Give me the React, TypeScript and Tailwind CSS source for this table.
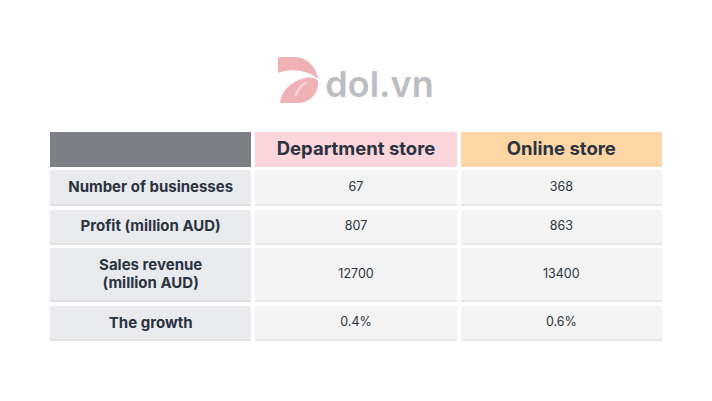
import React from 'react';

const rows = [
  { label: ['Number of businesses'], dept: '67', online: '368', h: 'h-[36px]' },
  { label: ['Profit (million AUD)'], dept: '807', online: '863', h: 'h-[35px]' },
  { label: ['Sales revenue', '(million AUD)'], dept: '12700', online: '13400', h: 'h-[54px]' },
  { label: ['The growth'], dept: '0.4%', online: '0.6%', h: 'h-[35px]' },
];

function Logo() {
  return (
    <div className="flex items-start gap-[7px]">
      <svg width="40" height="46" viewBox="0 0 40 46">
        {/* top band of the mark */}
        <path d="M0 0 H15 C28 0 38 8 40 22 C32 15 20 12.5 10 13.5 C5 14.2 2 15 0 16 Z" fill="#efb1b4" />
        {/* lower leaf */}
        <path d="M2 46 C3 34 13 24 27 21 C33 20 37 21 40 23.5 C41 37 32 46 19 46 Z" fill="#efb1b4" />
        <path d="M18 38 C20 32 23 28 28 26" stroke="#f8d6d7" strokeWidth="2.4" fill="none" strokeLinecap="round" />
      </svg>
      <span className="mt-[9px] text-[36px] font-semibold leading-none text-[#bcbdc2] font-['Inter',sans-serif]">
        dol.vn
      </span>
    </div>
  );
}

export default function App() {
  return (
    <div className="w-[712px] h-[401px] bg-white font-['Inter','Noto_Sans',sans-serif] text-[#2b3340]">
      <div className="flex justify-center pt-[57px]">
        <Logo />
      </div>

      <div className="mx-[50px] mt-[28.7px] grid grid-cols-3 gap-x-[4px] gap-y-[3.6px]">
        {/* header */}
        <div className="h-[35px] bg-[#7d7f87]" />
        <div className="h-[35px] bg-[#fdd5dc] flex items-center justify-center text-[18.5px] font-bold">
          Department store
        </div>
        <div className="h-[35px] bg-[#fed6a6] flex items-center justify-center text-[18.5px] font-bold">
          Online store
        </div>

        {rows.map((r) => (
          <React.Fragment key={r.label.join(' ')}>
            <div
              className={`${r.h} bg-[#e9eaee] border-b-2 border-[#dfe0e4] flex flex-col items-center justify-center text-[15px] font-bold leading-[18px]`}
            >
              {r.label.map((l) => (
                <span key={l}>{l}</span>
              ))}
            </div>
            <div className={`${r.h} bg-[#f3f3f3] border-b-2 border-[#e7e7e7] flex items-center justify-center text-[12.5px]`}>
              {r.dept}
            </div>
            <div className={`${r.h} bg-[#f3f3f3] border-b-2 border-[#e7e7e7] flex items-center justify-center text-[12.5px]`}>
              {r.online}
            </div>
          </React.Fragment>
        ))}
      </div>
    </div>
  );
}
